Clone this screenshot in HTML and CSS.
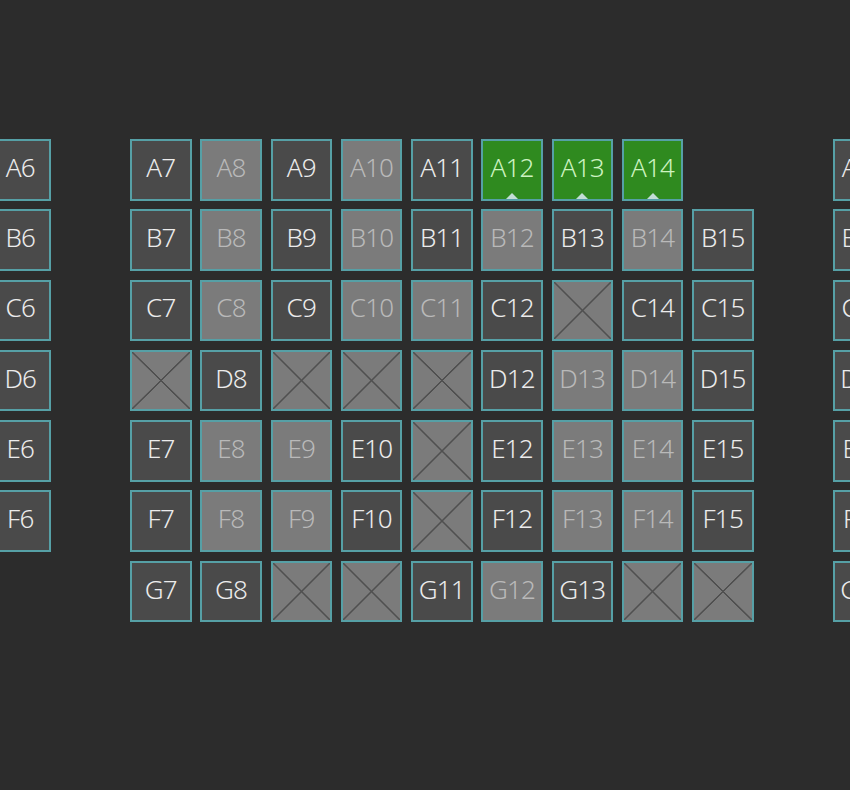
FILE: index.html
```html
<!DOCTYPE html>
<html lang="en">
<head>
<meta charset="utf-8">
<title>Seat map</title>
<link rel="stylesheet" href="styles.css">
</head>
<body>
<main class="hall">
  <section class="block block-1">
    <div class="seat">A6</div>
    <div class="seat">B6</div>
    <div class="seat">C6</div>
    <div class="seat">D6</div>
    <div class="seat">E6</div>
    <div class="seat">F6</div>
  </section>

  <section class="block block-9">
    <div class="seat">A7</div>
    <div class="seat taken">A8</div>
    <div class="seat">A9</div>
    <div class="seat taken">A10</div>
    <div class="seat">A11</div>
    <div class="seat selected">A12</div>
    <div class="seat selected">A13</div>
    <div class="seat selected">A14</div>
    <div class="empty"></div>

    <div class="seat">B7</div>
    <div class="seat taken">B8</div>
    <div class="seat">B9</div>
    <div class="seat taken">B10</div>
    <div class="seat">B11</div>
    <div class="seat taken">B12</div>
    <div class="seat">B13</div>
    <div class="seat taken">B14</div>
    <div class="seat">B15</div>

    <div class="seat">C7</div>
    <div class="seat taken">C8</div>
    <div class="seat">C9</div>
    <div class="seat taken">C10</div>
    <div class="seat taken">C11</div>
    <div class="seat">C12</div>
    <div class="seat blocked"></div>
    <div class="seat">C14</div>
    <div class="seat">C15</div>

    <div class="seat blocked"></div>
    <div class="seat">D8</div>
    <div class="seat blocked"></div>
    <div class="seat blocked"></div>
    <div class="seat blocked"></div>
    <div class="seat">D12</div>
    <div class="seat taken">D13</div>
    <div class="seat taken">D14</div>
    <div class="seat">D15</div>

    <div class="seat">E7</div>
    <div class="seat taken">E8</div>
    <div class="seat taken">E9</div>
    <div class="seat">E10</div>
    <div class="seat blocked"></div>
    <div class="seat">E12</div>
    <div class="seat taken">E13</div>
    <div class="seat taken">E14</div>
    <div class="seat">E15</div>

    <div class="seat">F7</div>
    <div class="seat taken">F8</div>
    <div class="seat taken">F9</div>
    <div class="seat">F10</div>
    <div class="seat blocked"></div>
    <div class="seat">F12</div>
    <div class="seat taken">F13</div>
    <div class="seat taken">F14</div>
    <div class="seat">F15</div>

    <div class="seat">G7</div>
    <div class="seat">G8</div>
    <div class="seat blocked"></div>
    <div class="seat blocked"></div>
    <div class="seat">G11</div>
    <div class="seat taken">G12</div>
    <div class="seat">G13</div>
    <div class="seat blocked"></div>
    <div class="seat blocked"></div>
  </section>

  <section class="block block-1">
    <div class="seat">A16</div>
    <div class="seat">B16</div>
    <div class="seat">C16</div>
    <div class="seat">D16</div>
    <div class="seat">E16</div>
    <div class="seat">F16</div>
    <div class="seat">G16</div>
  </section>
</main>
</body>
</html>
```

FILE: styles.css
```css
html, body {
  margin: 0;
  padding: 0;
  background: #2c2c2c;
  overflow: hidden;
  height: 100%;
}

.hall {
  display: flex;
  align-items: flex-start;
  gap: 79px;
  padding-top: 139px;
  margin-left: -10.5px;
  width: max-content;
}

.block {
  display: grid;
  grid-auto-rows: 61.5px;
  gap: 8.8px 8.75px;
}

.block-1 {
  grid-template-columns: 61.5px;
}

.block-9 {
  grid-template-columns: repeat(9, 61.5px);
}

.seat {
  position: relative;
  box-sizing: border-box;
  display: flex;
  align-items: center;
  justify-content: center;
  padding-bottom: 6px;
  border: 2px solid #56a0a6;
  background: #4a4a4a;
  color: #ececec;
  font-family: "Noto Sans", "Open Sans", sans-serif;
  font-weight: 300;
  font-size: 26px;
  letter-spacing: -0.8px;
  line-height: 1;
}

.seat.taken {
  background: #7b7b7b;
  color: #b9b9b9;
}

.seat.selected {
  background: #2f8a1f;
  color: #cdf3c1;
}

.seat.selected::after {
  content: "";
  position: absolute;
  left: 50%;
  bottom: 0;
  margin-left: -6px;
  border-left: 6px solid transparent;
  border-right: 6px solid transparent;
  border-bottom: 6px solid #c3ddd6;
}

.seat.blocked {
  background:
    linear-gradient(to top right, transparent calc(50% - 1px), #505050 calc(50% - 0.5px), #505050 calc(50% + 0.5px), transparent calc(50% + 1px)),
    linear-gradient(to bottom right, transparent calc(50% - 1px), #505050 calc(50% - 0.5px), #505050 calc(50% + 0.5px), transparent calc(50% + 1px)),
    #7b7b7b;
}
```
